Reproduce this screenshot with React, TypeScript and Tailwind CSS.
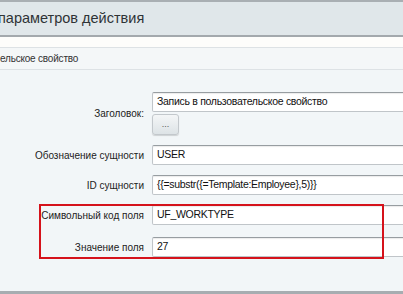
export default function App() {
  const font = { fontFamily: '"Liberation Sans", Arial, sans-serif' };
  return (
    <div className="w-[403px] h-[294px] overflow-hidden bg-[#f2f6f8] flex flex-col" style={font}>
      {/* header */}
      <div className="h-[37px] shrink-0 border-t-2 border-b-2 border-t-[#a9afb3] border-b-[#a3a9ad] bg-[#e0e7ea] flex items-center">
        <h1 className="-ml-[2px] text-[14.5px] text-[#2f3336] leading-none">параметров действия</h1>
      </div>
      <div className="h-[10px] shrink-0 bg-[#fdfdfb]" />
      <div className="h-[23px] shrink-0 border-y border-[#dde2e5] bg-[#f4f7f8] flex items-center">
        <span className="text-[10px] text-[#333] leading-none tracking-[-0.2px]">ельское свойство</span>
      </div>

      {/* form */}
      <div className="flex-1 pt-[22px] flex flex-col gap-[10px] border-b-[3px] border-[#a7adb1]">
        <Row label="Заголовок:">
          <div className="flex flex-col gap-[2px]">
            <Field value="Запись в пользовательское свойство" />
            <button className="w-[27px] h-[21px] rounded-[3px] border border-[#c3c8cc] bg-gradient-to-b from-[#f4f6f7] to-[#dde3e6] text-[9px] text-[#555] leading-none shadow-[0_1px_1px_rgba(0,0,0,0.15)]">
              ...
            </button>
          </div>
        </Row>
        <Row label="Обозначение сущности">
          <Field value="USER" />
        </Row>
        <Row label="ID сущности">
          <Field value="{{=substr({=Template:Employee},5)}}" />
        </Row>
        <div className="relative flex flex-col gap-[12px]">
          <Row label="Символьный код поля">
            <Field value="UF_WORKTYPE" />
          </Row>
          <Row label="Значение поля">
            <Field value="27" />
          </Row>
          <div className="absolute left-[39px] top-[-1px] w-[345px] h-[55px] border-2 border-[#d5121b]" />
        </div>
      </div>
    </div>
  );
}

function Row({ label, children }: { label: string; children: React.ReactNode }) {
  return (
    <div className="flex items-center">
      <label className="w-[145px] shrink-0 pr-[1px] text-right text-[10px] text-[#222]">{label}</label>
      <div className="ml-[7px] flex-1">{children}</div>
    </div>
  );
}

function Field({ value }: { value: string }) {
  return (
    <div className="h-[20px] w-[300px] rounded-[2px] border border-[#c0c5c9] border-t-[#979da1] bg-white pl-[4px] flex items-center text-[10.5px] tracking-[-0.3px] text-[#111] shadow-[inset_0_1px_1px_rgba(0,0,0,0.08)]">
      {value}
    </div>
  );
}
